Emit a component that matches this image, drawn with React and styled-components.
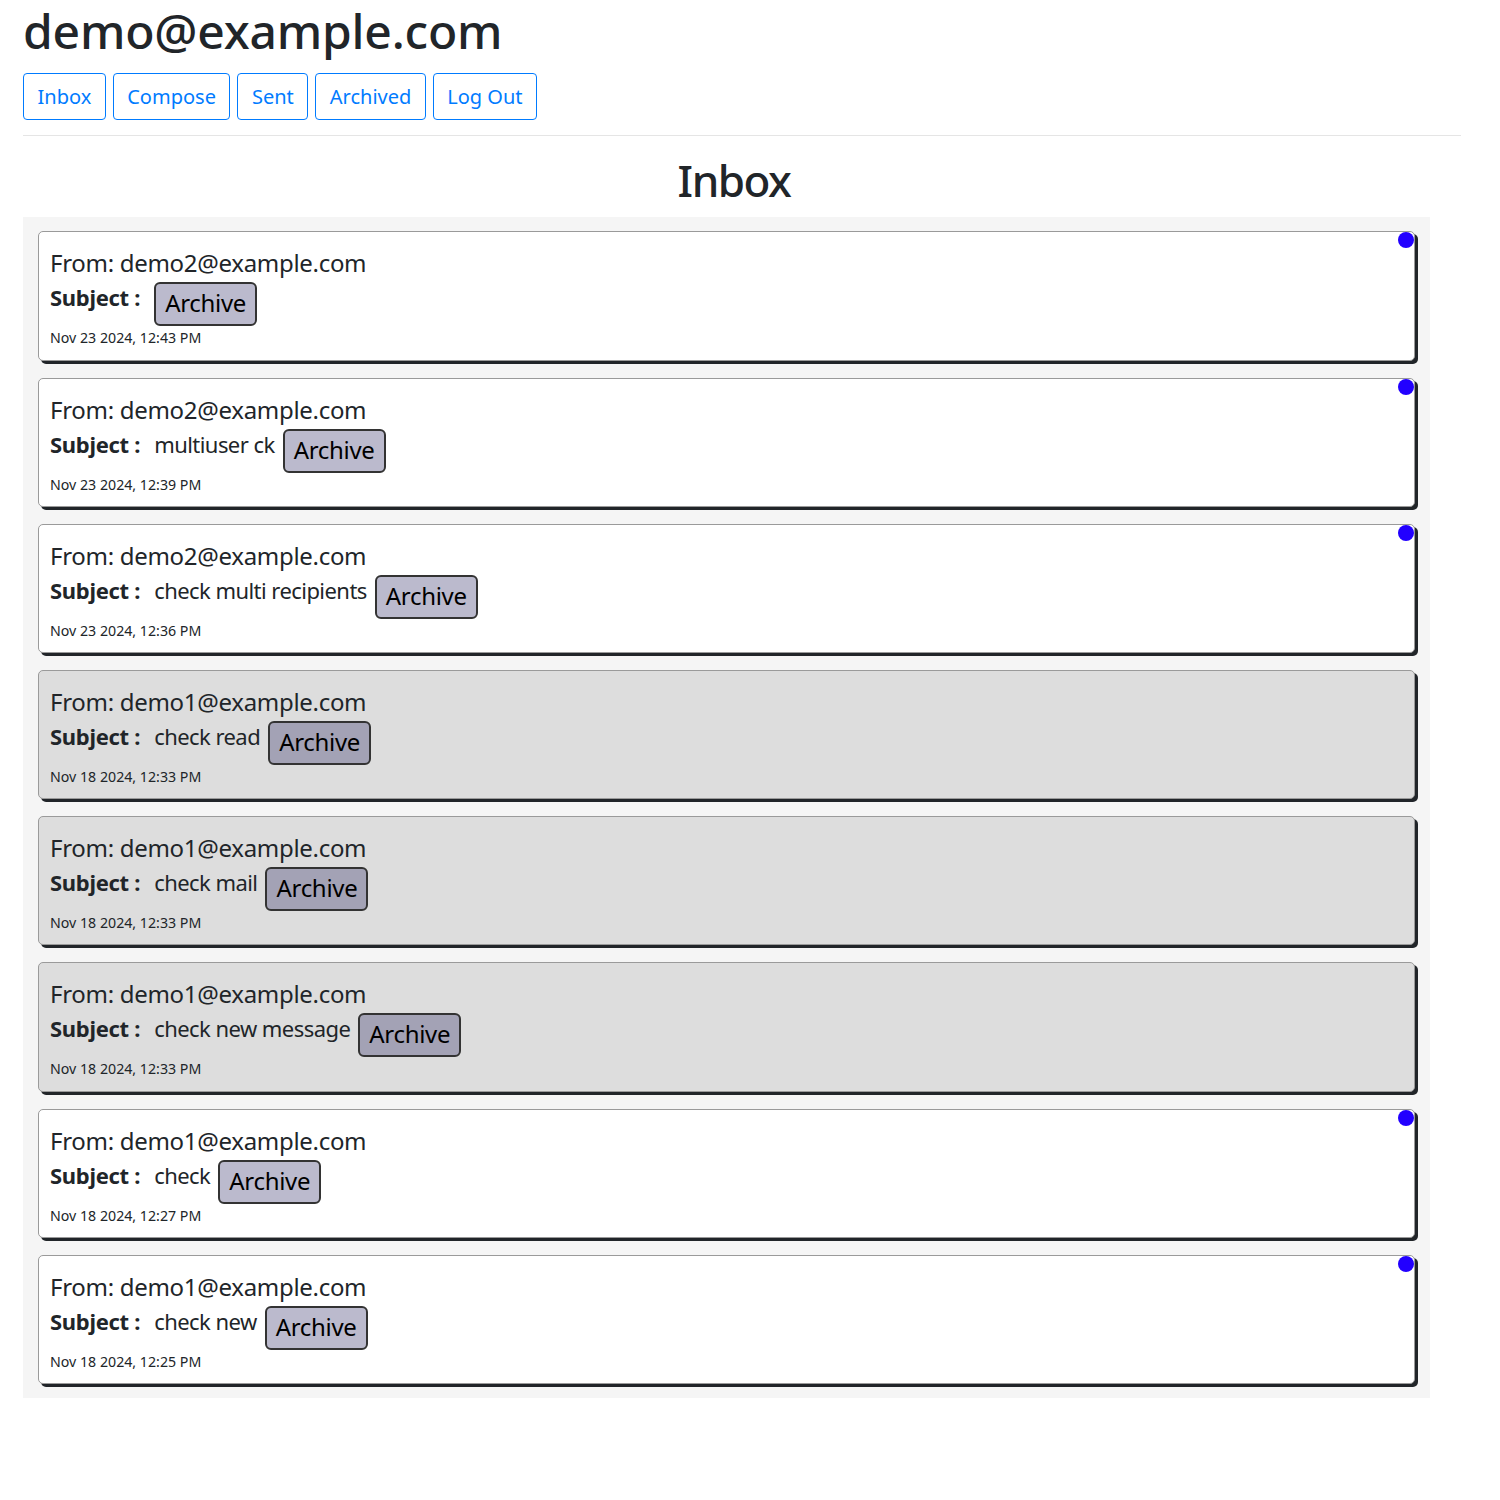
import React from "react";
import styled, { createGlobalStyle } from "styled-components";

const Global = createGlobalStyle`
  html, body { margin: 0; padding: 0; background: #fff; }
  body {
    font-family: "Noto Sans", "Open Sans", "Liberation Sans", sans-serif;
    color: #212529;
  }
`;

const Page = styled.div`
  padding: 0 39px 40px 23px;
`;

const Title = styled.h1`
  margin: 0;
  padding-top: 2px;
  font-size: 48px;
  font-weight: 500;
  line-height: 1.2;
  letter-spacing: -0.2px;
`;

const Nav = styled.nav`
  display: flex;
  gap: 7px;
  margin-top: 13px;
`;

const NavButton = styled.button`
  font-family: inherit;
  font-size: 20px;
  line-height: 1.5;
  padding: 8px 13.5px 7px;
  color: #007bff;
  background: #fff;
  border: 1px solid #007bff;
  border-radius: 4px;
  cursor: pointer;
`;

const Rule = styled.hr`
  margin: 15px 0 0;
  border: 0;
  border-top: 1px solid #e5e5e5;
`;

const SectionTitle = styled.h2`
  margin: 18px 0 11px;
  text-align: center;
  font-size: 44px;
  font-weight: 500;
  line-height: 1.2;
  letter-spacing: -1.5px;
  padding-right: 16px;
`;

const List = styled.div`
  width: 1407px;
  box-sizing: border-box;
  background: #f5f5f5;
  padding: 14px 15px 14px;
  display: flex;
  flex-direction: column;
  gap: 16.9px;
`;

const Card = styled.div`
  position: relative;
  background: ${(p) => (p.$read ? "#dddddd" : "#ffffff")};
  border: 1px solid #9a9a9a;
  border-radius: 5px;
  box-shadow: 3px 3px 0 #212529;
  padding: 13px 11px 11px;
`;

const Dot = styled.span`
  position: absolute;
  top: 0;
  right: 0;
  width: 16px;
  height: 16px;
  border-radius: 50%;
  background: #2200ff;
`;

const From = styled.div`
  font-size: 24px;
  line-height: 1.5;
  letter-spacing: -0.3px;
`;

const SubjectRow = styled.div`
  display: flex;
  align-items: flex-start;
  font-size: 22px;
  line-height: 1.5;
`;

const Label = styled.b`
  font-weight: 700;
  margin-right: 14px;
  letter-spacing: -0.3px;
`;

const SubjectText = styled.span`
  margin-right: 8px;
  letter-spacing: -0.55px;
`;

const ArchiveButton = styled.button`
  font-family: inherit;
  font-size: 24px;
  line-height: 1.5;
  color: #000;
  padding: 1px 9px 3px;
  margin-top: 1px;
  background: rgba(30, 26, 90, 0.3);
  border: 2px solid #333;
  border-radius: 6px;
  letter-spacing: -0.3px;
  cursor: pointer;
`;

const DateLine = styled.div`
  font-size: 14.2px;
  line-height: 1.5;
  margin-top: 1px;
`;

const mails = [
  { from: "demo2@example.com", subject: "", date: "Nov 23 2024, 12:43 PM", read: false },
  { from: "demo2@example.com", subject: "multiuser ck", date: "Nov 23 2024, 12:39 PM", read: false },
  { from: "demo2@example.com", subject: "check multi recipients", date: "Nov 23 2024, 12:36 PM", read: false },
  { from: "demo1@example.com", subject: "check read", date: "Nov 18 2024, 12:33 PM", read: true },
  { from: "demo1@example.com", subject: "check mail", date: "Nov 18 2024, 12:33 PM", read: true },
  { from: "demo1@example.com", subject: "check new message", date: "Nov 18 2024, 12:33 PM", read: true },
  { from: "demo1@example.com", subject: "check", date: "Nov 18 2024, 12:27 PM", read: false },
  { from: "demo1@example.com", subject: "check new", date: "Nov 18 2024, 12:25 PM", read: false },
];

export default function App() {
  return (
    <Page>
      <Global />
      <Title>demo@example.com</Title>
      <Nav>
        {["Inbox", "Compose", "Sent", "Archived", "Log Out"].map((t) => (
          <NavButton key={t}>{t}</NavButton>
        ))}
      </Nav>
      <Rule />
      <SectionTitle>Inbox</SectionTitle>
      <List>
        {mails.map((m, i) => (
          <Card key={i} $read={m.read}>
            {!m.read && <Dot />}
            <From>From: {m.from}</From>
            <SubjectRow>
              <Label>Subject :</Label>
              {m.subject && <SubjectText>{m.subject}</SubjectText>}
              <ArchiveButton>Archive</ArchiveButton>
            </SubjectRow>
            <DateLine>{m.date}</DateLine>
          </Card>
        ))}
      </List>
    </Page>
  );
}
